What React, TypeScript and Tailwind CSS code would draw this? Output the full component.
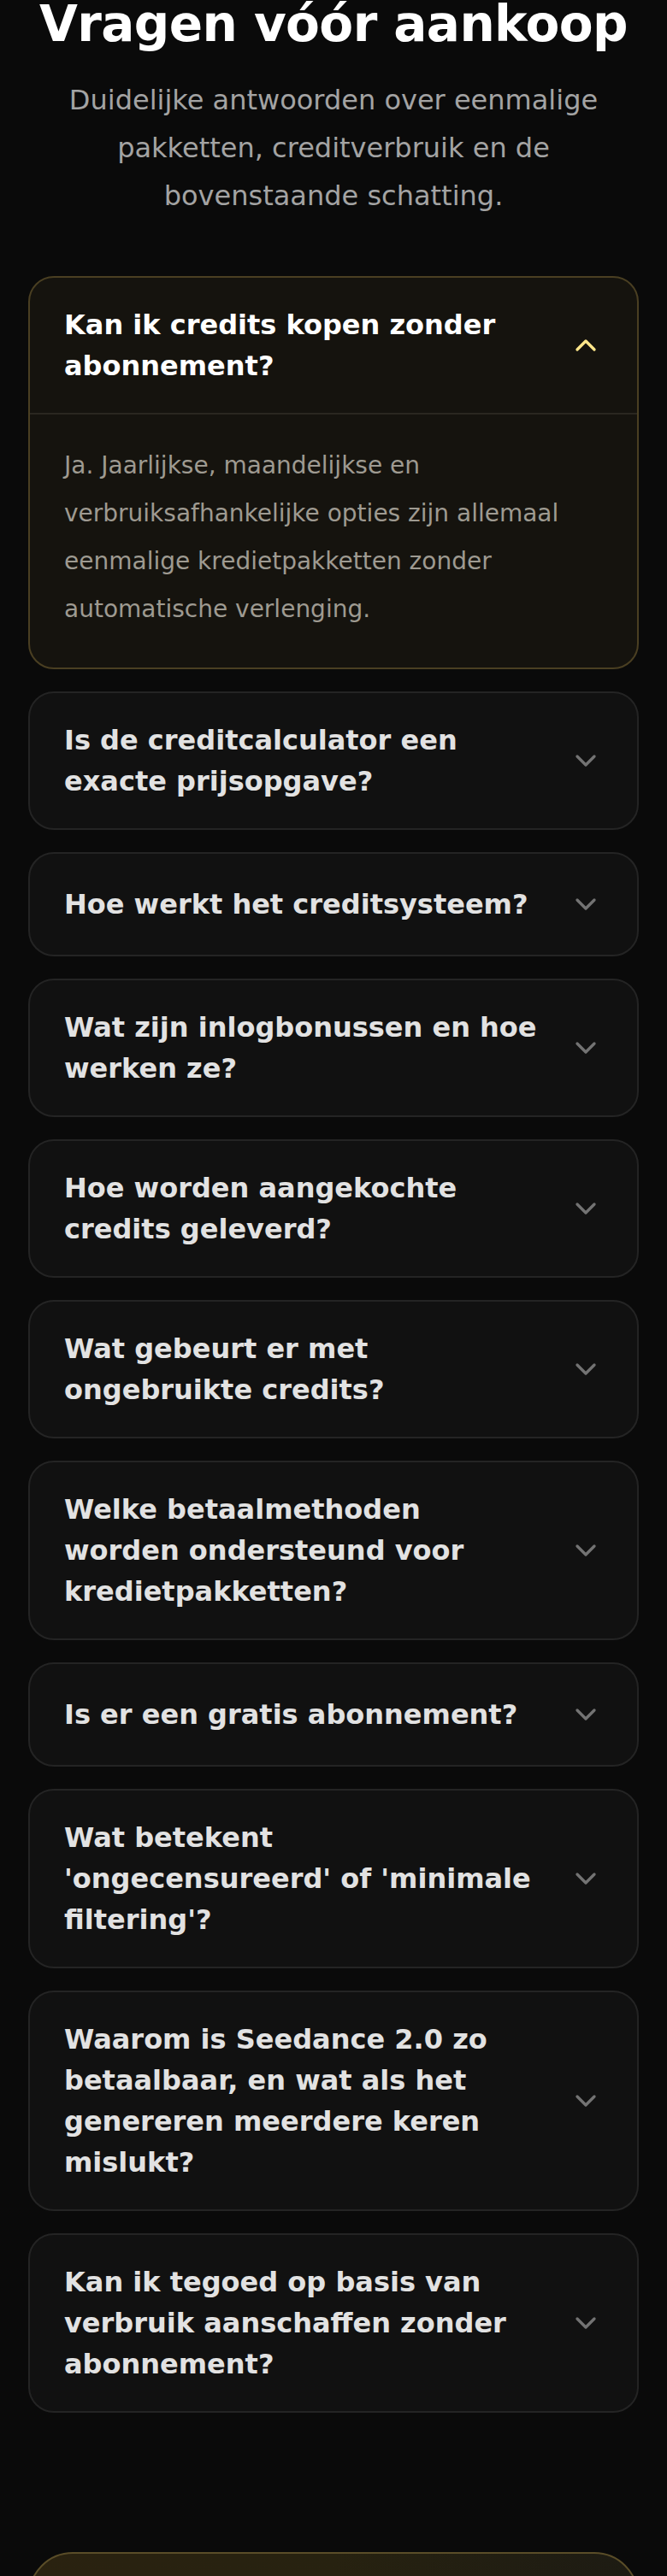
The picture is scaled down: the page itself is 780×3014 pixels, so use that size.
import { useState } from 'react';
import { ChevronDown } from 'lucide-react';

const faqs = [
  {
    q: 'Kan ik credits kopen zonder abonnement?',
    a: 'Ja. Jaarlijkse, maandelijkse en verbruiksafhankelijke opties zijn allemaal eenmalige kredietpakketten zonder automatische verlenging.',
  },
  { q: 'Is de creditcalculator een exacte prijsopgave?', a: '' },
  { q: 'Hoe werkt het creditsysteem?', a: '' },
  { q: 'Wat zijn inlogbonussen en hoe werken ze?', a: '' },
  { q: 'Hoe worden aangekochte credits geleverd?', a: '' },
  { q: 'Wat gebeurt er met ongebruikte credits?', a: '' },
  { q: 'Welke betaalmethoden worden ondersteund voor kredietpakketten?', a: '' },
  { q: 'Is er een gratis abonnement?', a: '' },
  { q: "Wat betekent 'ongecensureerd' of 'minimale filtering'?", a: '' },
  { q: 'Waarom is Seedance 2.0 zo betaalbaar, en wat als het genereren meerdere keren mislukt?', a: '' },
  { q: 'Kan ik tegoed op basis van verbruik aanschaffen zonder abonnement?', a: '' },
];

export default function App() {
  const [open, setOpen] = useState<number | null>(0);

  return (
    <main
      className="h-[3014px] overflow-hidden bg-[#0a0a0a] text-white"
      style={{ fontFamily: '"DejaVu Sans", "Noto Sans", sans-serif' }}
    >
      {/* FAQ */}
      <section className="px-[33px]">
        <h2 className="-mt-[4px] text-center text-[58px] font-bold leading-[64px] tracking-[-0.01em] text-white">
          Vragen vóór aankoop
        </h2>
        <p className="mt-[29px] text-center text-[32px] leading-[56px] text-[#a3a3a3]">
          Duidelijke antwoorden over eenmalige pakketten, creditverbruik en de bovenstaande schatting.
        </p>

        <div className="mt-[66px] flex flex-col gap-[26px]">
          {faqs.map((item, i) => {
            const isOpen = open === i;
            return (
              <div
                key={i}
                className={`overflow-hidden rounded-[30px] border-2 ${
                  isOpen ? 'border-[#4a3f22] bg-[#15130e]' : 'border-[#242424] bg-[#111111]'
                }`}
              >
                <button
                  onClick={() => setOpen(isOpen ? null : i)}
                  className="flex min-h-[118px] w-full items-center gap-[32px] px-[40px] py-[31px] text-left"
                >
                  <span
                    className={`flex-1 text-[32px] font-bold leading-[48px] ${
                      isOpen ? 'text-white' : 'text-[#e2e2e2]'
                    }`}
                  >
                    {item.q}
                  </span>
                  <ChevronDown
                    size={40}
                    strokeWidth={2}
                    className={`shrink-0 ${isOpen ? 'rotate-180 text-[#fde68a]' : 'text-[#737373]'}`}
                  />
                </button>
                {isOpen && (
                  <div className="border-t-2 border-[#2a2720] px-[40px] pb-[40px] pt-[32px]">
                    <p className="text-[28px] leading-[56px] text-[#9e9a91]">{item.a}</p>
                  </div>
                )}
              </div>
            );
          })}
        </div>
      </section>

      {/* CTA-Karte unten (angeschnitten) */}
      <section className="mt-[163px] px-[33px]">
        <div className="h-[320px] rounded-[52px] border-2 border-[#5a4d28] bg-gradient-to-r from-[#2a2210] via-[#272210] to-[#1d1b13]" />
      </section>
    </main>
  );
}
